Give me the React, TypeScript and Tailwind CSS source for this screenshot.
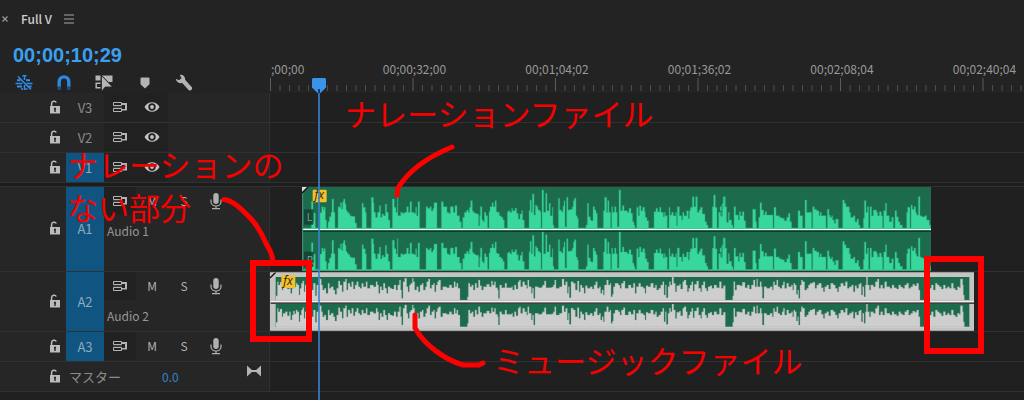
import type { ReactNode } from "react";

/* Sampled levels: "x:y" pairs in thirds of a pixel, one string for each stretch of the clip. */
const VOICE: [number, string][] = [
  [0, "34:64 39:125 41:99 46:146 60:98 65:80 70:90 72:82 76:120 80:146 84:125 88:110 93:97 96:57 101:97 105:146 114:80 118:82 121:68 125:87 128:65 131:57 135:72 138:90 141:95 145:100 150:107 155:109 165:129 170:146 186:70 190:82 196:97 199:146 214:52 220:68 222:97 227:112 232:97 238:77 242:112 246:102 251:107 256:72 260:97 265:120 270:146 277:57 283:82 288:97 292:52 294:107 302:97 308:100 313:97 320:80 325:97 330:65 335:97 343:100 347:82 350:107 354:65 359:146 378:80 383:85 390:80 394:92 399:85 402:68 411:146 424:65 430:80 441:97 446:100 451:80 460:97 465:77 471:107 479:125 484:146 488:112 493:97 500:90 505:97 508:82 512:62 517:92 520:97 525:100 530:102 536:137 539:107 541:80 546:120 550:125 553:97 558:107 563:146 567:95 570:80 576:68 580:80 585:62 589:95 593:97 598:107 604:112 609:120 613:146 622:95 626:92"],
  [630, "0:97 5:85 8:92 15:85 20:100 25:117 30:102 35:92 38:120 43:146 57:92 60:60 64:97 67:42 72:105 76:75 80:80 84:90 90:95 93:146 96:30 101:97 107:40 111:92 117:70 121:107 127:82 129:135 132:146 145:55 149:90 155:95 159:78 162:62 165:140 170:52 174:90 180:88 187:80 190:62 193:55 198:107 202:115 205:146 228:135 232:70 236:110 241:120 244:122 249:80 254:90 258:100 262:146 280:92 284:52 290:97 293:62 297:97 302:146 305:80 308:97 314:80 318:97 322:140 327:30 332:92 337:77 342:92 352:97 357:85 363:100 368:125 372:135 375:146 380:82 385:107 388:77 393:92 398:82 404:95 406:112 411:122 416:146 432:95 438:85 443:95 449:82 453:97 460:110 463:97 466:107 472:146 477:82 480:105 485:97 490:107 497:97 500:137 502:80 508:107 515:120 518:97 522:107 530:92 535:115 538:92 541:82 547:50 552:80 557:50 562:97 567:90 571:82 577:102 585:125 590:135 594:146 607:80 611:45 616:82 621:146 626:97 632:107 637:70 641:50 646:80"],
  [1260, "0:92 4:110 5:75 9:50 15:80 20:127 25:97 28:120 35:135 39:146 42:80 47:105 55:120 58:95 62:107 67:95 72:122 77:146 98:88 107:125 110:146 116:112 120:68 125:90 131:105 135:95 140:105 159:146 162:82 168:107 178:112 185:115 193:122 200:112 205:100 210:125 215:146 234:92 240:107 248:146 255:60 260:97 275:146 278:80 283:88 290:92 297:107 300:97 304:107 318:146 322:88 327:105 330:112 335:107 338:120 343:130 347:117 355:146 368:60 373:70 378:80 388:97 392:112 400:107 405:125 411:117 416:135 420:146 430:115 433:62 438:97 442:80 446:146 450:80 455:107 460:90 470:97 473:107 478:95 484:107 488:146 491:92 496:70 500:107 508:125 515:112 520:146 525:92 530:110 535:125 540:135 547:146 560:97 563:82 570:146 573:75 577:88 582:80 587:97 590:105 595:50 600:107 605:110 615:107 620:120 628:135 632:146"],
];

const MUSIC: [number, string][] = [
  [0, "47:92 52:50 55:60 60:52 66:75 69:65 76:60 82:72 88:60 92:85 96:70 100:58 104:66 108:55 112:60 117:90 120:70 124:55 128:48 132:80 135:60 145:68 155:75 160:55 166:92 170:60 176:40 180:42 184:60 188:75 193:70 198:85 204:55 208:70 213:65 220:75 225:88 230:70 235:48 240:60 246:80 250:50 256:42 260:75 264:55 270:65 275:50 280:72 285:60 290:50 295:65 300:70 305:55 310:65 318:50 322:70 330:60 340:65 348:50 352:60 356:85 360:65 365:75 370:55 375:70 380:85 384:65 390:70 396:72 402:60 408:75 413:60 418:45 422:75 425:100 429:50 434:40 440:65 444:80 448:60 452:55 457:40 460:50 464:75 470:65 475:80 480:60 486:55 490:75 496:65 500:50 505:42 510:70 515:60 520:55 524:80 528:60 532:50 536:45 542:75 548:65 560:68 568:60 575:68 582:50 586:65 590:55 594:70 600:106 622:95 625:55 630:65 635:60 640:75 645:55 650:68 655:45 660:62 665:75 670:65 680:58 688:65 694:48 698:60 703:50 707:68 713:75 715:100 719:60 725:68 735:55 740:68"],
  [750, "0:68 5:65 8:75 13:60 18:72 24:50 28:45 32:65 38:50 44:60 50:70 53:45 57:65 64:85 67:70 71:100 75:65 85:68 95:65 98:60 103:48 108:68 125:66 130:60 134:45 138:70 148:65 156:42 162:60 167:50 172:85 175:65 178:98 183:50 190:55 196:75 202:48 207:80 211:60 216:68 222:85 226:62 232:70 240:65 247:72 252:60 257:50 262:70 268:65 272:85 276:75 280:90 283:60 290:45 295:60 300:55 303:95 307:88 310:65 315:55 325:60 330:70 334:55 340:48 345:70 355:60 363:68 370:55 375:85 379:65 386:55 392:65 400:70 405:85 408:62 414:65 422:55 430:68 436:60 440:75 446:70 452:60 458:50 462:90 466:60 469:98 474:65 478:50 482:60 486:36 491:55 496:80 500:62 508:58 512:72 518:50 522:45 528:60 532:80 536:70 540:60 545:50 549:78 553:58 560:48 566:70 572:80 575:60 580:50 585:70 590:78 594:65 600:62 606:70 612:60 620:68 628:50 634:70 640:62 646:106 668:92 671:50 675:75 680:60 690:62 697:52 705:68 712:60 718:72 724:60 730:45 735:65 740:42 743:65"],
  [1500, "0:50 4:65 7:100 12:65 20:70 30:65 37:75 40:50 44:60 50:45 54:65 60:70 66:60 70:50 74:70 80:55 86:65 94:60 98:75 101:55 105:60 109:88 113:75 116:100 120:60 124:45 128:50 134:75 140:70 145:60 150:55 158:52 165:70 170:60 176:55 184:68 190:80 194:65 200:60 206:72 212:55 220:60 226:70 232:80 236:65 242:55 250:62 256:50 262:70 268:65 275:60 280:80 285:62 290:70 296:58 300:55 304:90 308:65 312:95 316:60 319:36 323:60 328:75 332:60 340:65 346:50 352:42 357:70 362:60 368:70 374:50 380:65 390:70 396:60 402:68 410:72 416:60 422:66 428:70 434:60 440:55 446:70 452:65 458:58 464:62 470:55 476:75 480:106 498:75 502:60 508:70 514:60 520:75 526:55 532:60 538:65 544:72 550:60 556:70 562:65 568:70 574:55 580:70 586:75 592:65 598:68 601:42 608:60 610:90 613:106 628:106"],
];

function wavePath(parts: [number, string][], base: number) {
  let d = "";
  let y = base;
  for (const [offset, text] of parts) {
    for (const pair of text.split(" ")) {
      const [px, py] = pair.split(":").map(Number);
      d += d === "" ? `M${px + offset} ${base}V${py}` : `H${px + offset}V${py}`;
      y = py;
    }
  }
  return y === base ? d + "Z" : d + `V${base}Z`;
}

const VOICE_PATH = wavePath(VOICE, 146);
const MUSIC_PATH = wavePath(MUSIC, 106);

const LockIcon = () => (
  <svg width="12" height="14" viewBox="0 0 12 14" aria-hidden="true">
    <path d="M2.600 7V3.600a2.500 2.500 0 0 1 4.700-1.100" fill="none" stroke="#bcbcbc" strokeWidth="1.500" />
    <path d="M1 6h10v7.500H1z" fill="#bcbcbc" />
    <path d="M6 7.600a1.200 1.200 0 0 1 .7 2.100V12H5.300V9.700A1.200 1.200 0 0 1 6 7.600z" fill="#262626" />
  </svg>
);

const SyncIcon = () => (
  <svg width="16" height="12" viewBox="0 0 16 12" fill="none" stroke="#b4b4b4" aria-hidden="true">
    <path d="M1.500 1.500h8v3h-8zM1.500 7.500h8v3h-8z" />
    <path d="M1 6h9" stroke="#5a5a5a" />
    <path d="M10 2h5v7.500h-5V8h3V4h-3z" fill="#b4b4b4" stroke="none" />
  </svg>
);

const EyeIcon = () => (
  <svg width="16" height="12" viewBox="0 0 16 12" aria-hidden="true">
    <path d="M.5 6C3.500-.4 12.500-.4 15.500 6 12.500 12.400 3.500 12.400.5 6z" fill="#c4c4c4" />
    <circle cx="8" cy="6" r="3.700" fill="#222" />
    <circle cx="8" cy="6" r="1.900" fill="#c4c4c4" />
  </svg>
);

const MicIcon = () => (
  <svg width="12" height="18" viewBox="0 0 12 18" fill="none" stroke="#b0b0b0" strokeWidth="1.200" aria-hidden="true">
    <rect x="3.300" y="1" width="5.400" height="11" rx="2.700" fill="#b0b0b0" stroke="none" />
    <path d="M1 7.500v2.300a5 4.200 0 0 0 10 0V7.500M6 14v2.500M2 16.700h8" />
  </svg>
);

function IconButton({ label, dark, children }: { label: string; dark?: boolean; children: ReactNode }) {
  return (
    <button
      type="button"
      aria-label={label}
      className={`flex h-7 w-8 shrink-0 items-center justify-center text-xs text-[#b0b0b0] ${dark ? "bg-[#212121]" : ""}`}
    >
      {children}
    </button>
  );
}

type Track = { id: string; kind: "video" | "audio"; target?: boolean; title?: string; height: string; clip?: ReactNode };

function TrackRow({ id, kind, target, title, height, clip }: Track) {
  return (
    <section aria-label={id} className={`flex ${height}`}>
      <div className="flex w-[270px] shrink-0 border-r border-b border-[#303030] bg-[#262626]">
        <button type="button" aria-label={`${id} lock`} className="flex w-[66px] shrink-0 items-center justify-end pr-[5px] pb-[2px]">
          <LockIcon />
        </button>
        <button
          type="button"
          className={`w-[38px] shrink-0 text-[13px] ${target ? "bg-[#105582] text-[#8fa9bd]" : "text-[#8c8c8c]"}`}
        >
          {id}
        </button>
        <div className="flex-1">
          <div className="flex">
            <IconButton label={`${id} sync lock`} dark>
              <SyncIcon />
            </IconButton>
            {kind === "video" ? (
              <IconButton label={`${id} visibility`} dark>
                <EyeIcon />
              </IconButton>
            ) : (
              <>
                <IconButton label={`${id} mute`}>M</IconButton>
                <IconButton label={`${id} solo`}>S</IconButton>
                <IconButton label={`${id} record`}>
                  <MicIcon />
                </IconButton>
              </>
            )}
          </div>
          {title && <p className="pl-[3px] text-xs leading-8 text-[#989898]">{title}</p>}
        </div>
      </div>
      <div className="min-w-0 flex-1 overflow-hidden border-b border-[#303030] bg-[#202020]">{clip}</div>
    </section>
  );
}

const FxBadge = ({ x, y }: { x: number; y: number }) => (
  <g>
    <rect x={x} y={y} width="42" height="38" rx="3" fill="#f3c12c" />
    <text x={x + 20} y={y + 28} textAnchor="middle" fontSize="36" fontWeight="500" fontStyle="italic" fontFamily="Open Sans, sans-serif" fill="#2c2408">
      fx
    </text>
  </g>
);

const VoiceClip = () => (
  <svg className="ml-8 block" width="629" height="84" viewBox="6 21 1887 252" role="img" aria-label="Narration clip">
    <rect x="6" y="21" width="1887" height="252" fill="#1d6b4d" />
    <path d={VOICE_PATH} fill="#38d79b" stroke="#2aa577" strokeWidth="1.500" />
    <path d={VOICE_PATH} transform="translate(0 124)" fill="#38d79b" stroke="#2aa577" strokeWidth="1.500" />
    <path d="M8 145H1893M8 270H1893" stroke="#38d79b" strokeWidth="3" />
    <path d="M8 149H1893" stroke="#f4fff9" strokeWidth="4" />
    <path d="M8 153.500H1893" stroke="#0c2c20" strokeWidth="4" />
    <path d="M8 22V273" stroke="#4e8f78" strokeWidth="3" />
    <path d="M6 21H24L6 39z" fill="#ddd" />
    <path d="M24 21L6 39" stroke="#111" strokeWidth="4" />
    <rect x="12" y="88" width="28" height="46" fill="#123f30" opacity=".85" />
    <rect x="12" y="215" width="28" height="46" fill="#123f30" opacity=".85" />
    <text x="20" y="123" fontSize="31" fill="#7fa899" fontFamily="Open Sans, sans-serif">L</text>
    <text x="20" y="251" fontSize="31" fill="#7fa899" fontFamily="Open Sans, sans-serif">R</text>
    <FxBadge x={38} y={29} />
  </svg>
);

const MusicClip = () => (
  <svg className="block" width="704" height="59" viewBox="30 21 2112 177" role="img" aria-label="Music clip">
    <rect x="30" y="21" width="2112" height="177" fill="#c4c4c4" />
    <path d="M47 36H2128V106H47zM47 117H2128V186H47z" fill="#1d6b4d" />
    <path d={MUSIC_PATH} fill="#cecece" stroke="#7da293" strokeWidth="1" />
    <path d={MUSIC_PATH} transform="translate(0 80)" fill="#cecece" stroke="#7da293" strokeWidth="1" />
    <path d="M47 107.500H2128M47 187H2128" stroke="#cecece" strokeWidth="3" />
    <path d="M32 110.500H2142" stroke="#fff" strokeWidth="4" />
    <path d="M32 114.500H2142" stroke="#161616" strokeWidth="4" />
    <path d="M30 21H48L30 39z" fill="#c4c4c4" />
    <path d="M48 21L30 39" stroke="#111" strokeWidth="4" />
    <path d="M30 22.500H2142M30 197H2142" stroke="#8a8a8a" strokeWidth="2" />
    <FxBadge x={64} y={31} />
  </svg>
);

const TRACKS: Track[] = [
  { id: "V3", kind: "video", height: "h-[30px]" },
  { id: "V2", kind: "video", height: "h-[30px]" },
  { id: "V1", kind: "video", target: true, height: "h-[30px]" },
  { id: "A1", kind: "audio", target: true, title: "Audio 1", height: "h-[85px]", clip: <VoiceClip /> },
  { id: "A2", kind: "audio", target: true, title: "Audio 2", height: "h-[60px]", clip: <MusicClip /> },
  { id: "A3", kind: "audio", target: true, height: "h-[30px]" },
];

const TIMES = [";00;00", "00;00;32;00", "00;01;04;02", "00;01;36;02", "00;02;08;04", "00;02;40;04"];

function Ruler() {
  return (
    <svg className="block h-[34px] w-full" aria-label="Time ruler">
      {TIMES.map((t, i) => (
        <text key={t} x={i === 0 ? 1 : i * 142.5 + 2} y="15" textAnchor={i === 0 ? "start" : "middle"} fontSize="12" fill="#999">
          {t}
        </text>
      ))}
      {Array.from({ length: 80 }, (_, i) => (
        <path key={i} d={`M${i * 9.5 + 0.5} ${i % 15 === 0 ? 19 : 26}V32`} stroke={i % 15 === 0 ? "#5c5c5c" : "#505050"} />
      ))}
    </svg>
  );
}

function Tools() {
  const tool = "flex h-5 w-10 items-center justify-center";
  return (
    <div className="flex pl-1">
      <button type="button" aria-label="Insert as nests" className={tool}>
        <svg width="18" height="18" viewBox="0 0 18 18" fill="none" stroke="#2f8fe8">
          <path d="M3 2.500l13 13" strokeWidth="1.500" />
          <path d="M9.500 1v5M7.500 1.700h4M9.500 11v5M6 15h2M10.500 15h2M.5 9.500h7M11.500 9.500h6" strokeWidth="1.500" />
          <path d="M2 6.200h3.500M11 6.200h4M2 12.500h5M13.500 12.500h3" strokeWidth="2" />
        </svg>
      </button>
      <button type="button" aria-label="Snap" className={tool}>
        <svg width="14" height="16" viewBox="0 0 14 16" fill="none" strokeWidth="3.400">
          <path d="M2.200 12V6.700a4.800 4.800 0 0 1 9.600 0V12" stroke="#2d86e0" />
          <path d="M2.200 11.500V15M11.800 11.500V15" stroke="#1b4d80" />
        </svg>
      </button>
      <button type="button" aria-label="Linked selection" className={tool}>
        <svg width="18" height="18" viewBox="0 0 18 18">
          <path d="M.5 1.500H5.500v5H.5zM7 1.500h10.500V8h-4z" fill="#b4b4b4" />
          <path d="M5.500 9.200H1.200v4.600h4.300" fill="none" stroke="#b4b4b4" strokeWidth="1.500" />
          <path d="M6.500 1.500V17.500l3.700-4.500h7.300z" fill="#b4b4b4" stroke="#232323" strokeWidth=".8" />
        </svg>
      </button>
      <button type="button" aria-label="Add marker" className={tool}>
        <svg className="ml-[2px]" width="10" height="12" viewBox="0 0 10 12">
          <path d="M1.500.5h7a1 1 0 0 1 1 1v5.700L5 11.500.5 7.200V1.500a1 1 0 0 1 1-1z" fill="#b4b4b4" />
        </svg>
      </button>
      <button type="button" aria-label="Timeline settings" className={tool}>
        <svg width="18" height="18" viewBox="0 0 18 18">
          <path d="M4.800.8c2.800-.8 5.800 1.600 5.300 5l6.600 7.200c1.500 1.900-1.100 4.600-3.100 2.900L7.200 9.100C4.500 9.800 1.300 8.200.8 4.800l3.100 1.500 2.600-2.100z" fill="#b4b4b4" />
        </svg>
      </button>
    </div>
  );
}

const NOTE = "absolute whitespace-nowrap text-[31px] font-normal leading-[43px] text-[#f60000]";

export default function App() {
  return (
    <main className="relative flex min-h-screen flex-col overflow-hidden bg-[#232323] font-['Noto_Sans_CJK_JP',sans-serif] text-[#b4b4b4]">
      <header className="flex h-[93px] shrink-0">
        <div className="flex w-[270px] shrink-0 flex-col">
          <div className="flex h-[37px] items-center">
            <button type="button" aria-label="Close" className="flex w-[21px] justify-start pl-[2px]">
              <svg width="6" height="6" viewBox="0 0 6 6" stroke="#999" strokeWidth="1.200"><path d="M.5.5l5 5M5.500.5l-5 5" /></svg>
            </button>
            <h1 className="text-xs font-medium text-[#cfcfcf]">Full V</h1>
            <button type="button" aria-label="Panel menu" className="pl-3">
              <svg width="10" height="10" viewBox="0 0 10 10" stroke="#a8a8a8" strokeWidth="1.200"><path d="M0 1h10M0 5h10M0 9h10" /></svg>
            </button>
          </div>
          <p className="pl-[13px] font-['Liberation_Sans',sans-serif] text-xl leading-9 font-bold text-[#3b9ff0]">00;00;10;29</p>
          <Tools />
        </div>
        <div className="flex min-w-0 flex-1 flex-col justify-end">
          <Ruler />
        </div>
      </header>

      {TRACKS.slice(0, 3).map((t) => (
        <TrackRow key={t.id} {...t} />
      ))}
      <div className="h-1 shrink-0 border-b border-[#303030] bg-[#1d1d1d]" />
      {TRACKS.slice(3).map((t) => (
        <TrackRow key={t.id} {...t} />
      ))}

      <section aria-label="Master" className="flex h-[30px] shrink-0">
        <div className="flex w-[270px] shrink-0 items-center border-r border-b border-[#303030] bg-[#262626]">
          <button type="button" aria-label="Master lock" className="flex w-[66px] justify-end pr-[5px] pb-[2px]">
            <LockIcon />
          </button>
          <span className="w-24 pl-[3px] text-[13px] text-[#8c8c8c]">マスター</span>
          <button type="button" className="text-xs text-[#2f86c8]">0.0</button>
          <button type="button" aria-label="Collapse" className="mr-2 mb-3 ml-auto">
            <svg width="14" height="12" viewBox="0 0 14 12" fill="#b4b4b4"><path d="M0 .5l6 5.500-6 5.500zM14 .5L8 6l6 5.500z" /><path d="M5 5h4v2H5z" /></svg>
          </button>
        </div>
        <div className="flex-1 border-b border-[#303030] bg-[#202020]" />
      </section>
      <div className="flex-1 bg-[#202020]" />

      <svg className="absolute top-[78px] left-[312px]" width="14" height="322" viewBox="0 0 14 322" aria-label="Playhead">
        <path d="M7 12V322" stroke="#3b82cf" strokeWidth="2" opacity=".8" />
        <path d="M1 0h12l1 1v8.500L8.500 15h-3L0 9.500V1z" fill="#3a92ea" />
        <path d="M7 11v4" stroke="#173a5e" strokeWidth="2" />
      </svg>

      <svg className="pointer-events-none absolute top-0 left-0" width="1024" height="400" viewBox="0 0 1024 400" fill="none" stroke="#fe0000" strokeWidth="5" strokeLinecap="round" strokeLinejoin="round" aria-hidden="true">
        <path d="M452 147C430 156 409 170 398 188L397 195" />
        <path d="M224 199.500C232 200 243 210 252 220C262 231 264 241 268 247Q272 253 273 261" />
        <path d="M415 315V328C425 346 446 360 463 365H479L483 363" />
        <path d="M253 263H309V339H253zM927 259H981V351H927z" strokeWidth="6" strokeLinejoin="miter" />
      </svg>
      <p className={`${NOTE} top-[91px] left-[345px]`}>ナレーションファイル</p>
      <p className={`${NOTE} top-[142px] left-[67px]`}>
        ナレーションの
        <br />
        ない部分
      </p>
      <p className={`${NOTE} top-[338px] left-[493px]`}>ミュージックファイル</p>
    </main>
  );
}
